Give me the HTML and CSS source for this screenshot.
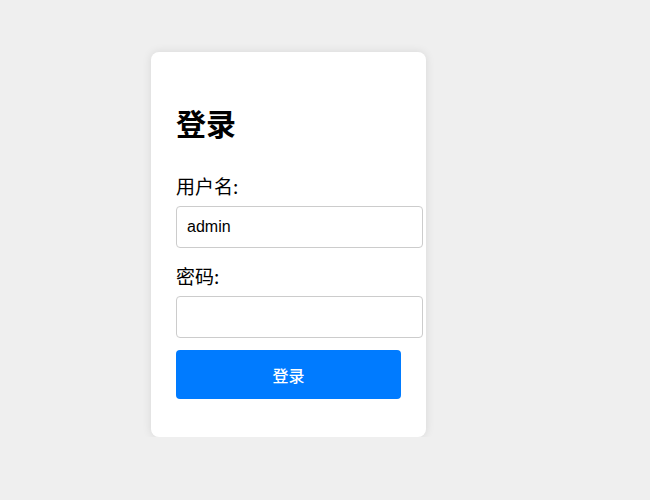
FILE: index.html
```html
<!DOCTYPE html>
<html lang="zh-CN">
<head>
<meta charset="utf-8">
<title>登录</title>
<link rel="stylesheet" href="styles.css">
</head>
<body>
<main class="page">
  <form class="card">
    <h2 class="title">登录</h2>
    <label class="label" for="u">用户名:</label>
    <input class="field" id="u" type="text" value="admin">
    <label class="label label-second" for="p">密码:</label>
    <input class="field" id="p" type="password">
    <button class="btn" type="button">登录</button>
  </form>
</main>
</body>
</html>
```
FILE: styles.css
```css
html, body {
  margin: 0;
  padding: 0;
  background: #efefef;
  font-family: "Liberation Sans", Arial, "Noto Sans CJK SC", sans-serif;
  color: #000;
}
.page {
  padding: 52px 0 0 151px;
}
.card {
  width: 225px;
  padding: 25px 25px 38px;
  background: #fff;
  border-radius: 8px;
  box-shadow: 0 0 10px rgba(0, 0, 0, 0.1);
  display: flex;
  flex-direction: column;
  align-items: flex-start;
}
.title {
  margin: 30px 0 0;
  font-size: 30px;
  line-height: 36px;
  font-weight: bold;
}
.label {
  margin-top: 32px;
  font-family: "Noto Sans CJK SC", "Liberation Sans", sans-serif;
  font-size: 19px;
  line-height: 22px;
}
.label-second {
  margin-top: 17px;
}
.field {
  margin: 9px 0 0;
  width: 247px;
  height: 42px;
  box-sizing: border-box;
  padding: 0 10px;
  border: 1px solid #ccc;
  border-radius: 4px;
  font-family: "Liberation Sans", Arial, sans-serif;
  font-size: 16px;
  color: #000;
  background: #fff;
  outline: none;
}
.btn {
  margin-top: 12px;
  width: 225px;
  height: 49px;
  border: none;
  border-radius: 4px;
  background: #007bff;
  color: #fff;
  font-family: "Noto Sans CJK SC", "Liberation Sans", sans-serif;
  font-size: 16px;
  font-weight: 500;
  cursor: pointer;
}
```
